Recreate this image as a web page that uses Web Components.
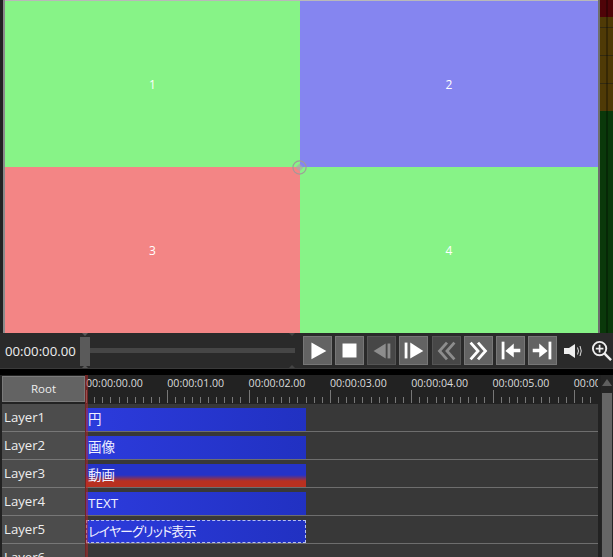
<!DOCTYPE html>
<html><head><meta charset="utf-8">
<style>
html,body{margin:0;background:#000;height:100%;overflow:hidden}
body{width:613px;height:557px;font-family:"Open Sans","Noto Sans CJK JP",sans-serif;color:#e8e8e8}
app-shell{display:block}
</style></head><body>
<app-shell>
  <preview-pane>
    <preview-tile color="#87f387">1</preview-tile>
    <preview-tile color="#8585f0">2</preview-tile>
    <preview-tile color="#f38585">3</preview-tile>
    <preview-tile color="#87f387">4</preview-tile>
  </preview-pane>
  <transport-bar></transport-bar>
  <time-line>
    <layer-row name="Layer1"><time-clip>円</time-clip></layer-row>
    <layer-row name="Layer2"><time-clip>画像</time-clip></layer-row>
    <layer-row name="Layer3"><time-clip kind="red">動画</time-clip></layer-row>
    <layer-row name="Layer4"><time-clip>TEXT</time-clip></layer-row>
    <layer-row name="Layer5"><time-clip kind="selected">レイヤーグリッド表示</time-clip></layer-row>
    <layer-row name="Layer6"></layer-row>
  </time-line>
</app-shell>
<script>
function def(name, html, proto){
  const t=document.createElement('template');t.innerHTML=html;
  customElements.define(name,class extends HTMLElement{
    constructor(){super();this.attachShadow({mode:'open'}).appendChild(t.content.cloneNode(true));}
    connectedCallback(){proto&&proto.call(this);}
  });
}
def('app-shell',`<style>:host{display:flex;flex-direction:column;width:613px;height:557px;overflow:hidden;background:#000}</style><slot></slot>`);

def('preview-tile',`<style>:host{display:flex;align-items:center;justify-content:center;font-size:12px;color:#fff}</style><slot></slot>`,
function(){this.style.background=this.getAttribute('color');});

def('preview-pane',`<style>
:host{display:flex;height:333px;background:#2b2b2b;flex:none;box-sizing:border-box}
.edge{width:3px;background:#222}.edge2{width:2px;background:#8a8a8a}
.main{width:593px;position:relative;display:flex;flex-direction:column}
.top{height:1px;background:#b9b9b9;flex:none}
.grid{flex:1;display:grid;grid-template-columns:295px 298px;grid-template-rows:166px 166px}
.sep{width:2px;background:#6e6e6e}
.meter{width:13px;display:flex;flex-direction:column;position:relative}
.meter .r{height:17px;background:#4f0408}
.meter .y{height:94px;background:#4f3a06;background-image:repeating-linear-gradient(to bottom,transparent 0 10px,#332a10 10px 11px,transparent 11px 28px)}
.meter .g{flex:1;background:#0a380a}
.meter i{position:absolute;left:6px;top:0;bottom:0;width:2px;background:rgba(0,0,0,.3)}
.pivot{position:absolute;left:287px;top:160px;width:15px;height:15px}
</style>
<div class="edge"></div><div class="edge2"></div>
<div class="main"><div class="top"></div><div class="grid"><slot></slot></div>
<svg class="pivot" viewBox="0 0 15 15"><circle cx="7.5" cy="7.5" r="6.6" fill="none" stroke="#a09a9a" stroke-width="1.2"/><path d="M7.5 3.5 11.5 7.5 7.5 11.5 3.5 7.5Z" fill="#a8a8a8" opacity=".7"/></svg>
</div>
<div class="sep"></div>
<div class="meter"><div class="r"></div><div class="y"></div><div class="g"></div><i></i></div>`);

const ic={
 play:'<path d="M8 6 24 15 8 24Z" fill="#fff"/>',
 stop:'<rect x="7" y="7" width="15" height="15" fill="#fff"/>',
 prev:'<path d="M19 7 6 15 19 23Z" fill="#8d8d8d"/><rect x="21" y="7" width="3" height="16" fill="#8d8d8d"/>',
 next:'<rect x="5" y="6" width="3" height="17" fill="#fff"/><path d="M11 6 25 15 11 23Z" fill="#fff"/>',
 rew:'<path d="M15 6 7 15 15 24M23 6 15 15 23 24" fill="none" stroke="#8d8d8d" stroke-width="3"/>',
 ff:'<path d="M6 6 14 15 6 24M14 6 22 15 14 24" fill="none" stroke="#fff" stroke-width="3"/>',
 first:'<rect x="5" y="5" width="3" height="19" fill="#fff"/><path d="M9 15 18 7V12.5H25V16.5H18V22Z" fill="#fff"/>',
 last:'<rect x="21" y="5" width="3" height="19" fill="#fff"/><path d="M20 15 11 7V12.5H4V16.5H11V22Z" fill="#fff"/>'
};
def('tool-btn',`<style>
:host{display:block;width:29px;height:29px;box-sizing:border-box;background:#636363;border:1px solid #777;flex:none}
:host([off]){background:#474747;border-color:#555}
svg{display:block;width:27px;height:27px}
</style><svg viewBox="0 0 29 29"></svg>`,function(){this.shadowRoot.querySelector('svg').innerHTML=ic[this.getAttribute('icon')];});

def('transport-bar',`<style>
:host{display:flex;align-items:center;height:35px;flex:none;background:#2a2a2a;border-bottom:1px solid #3a3a3a;box-sizing:content-box}
.time{width:75px;padding-left:5px;font-size:13.2px;color:#eee;flex:none;line-height:35px;margin-top:1px}
.slider{width:215px;height:35px;position:relative;flex:none;display:flex;align-items:center}
.thumb{width:10px;height:29px;background:#5a5a5a;flex:none;margin-top:1px}
.track{width:205px;height:5px;background:#464646;margin-top:-1px}
.tick{position:absolute;width:0;height:0;left:2px;border:3px solid transparent}
.t1{top:0;border-top-color:#5a5a5a}.t2{bottom:0;border-bottom-color:#5a5a5a}
.t3{top:0;left:209px;border-top-color:#444}.t4{bottom:0;left:209px;border-bottom-color:#444}
.btns{display:flex;gap:3.140px;margin-left:8px;margin-top:-1px}
.ext{display:flex;align-items:center;margin-left:6px;gap:8px}
</style>
<div class="time">00:00:00.00</div>
<div class="slider"><div class="thumb"></div><div class="track"></div><i class="tick t1"></i><i class="tick t2"></i><i class="tick t3"></i><i class="tick t4"></i></div>
<div class="btns">
<tool-btn icon="play"></tool-btn><tool-btn icon="stop"></tool-btn><tool-btn icon="prev" off></tool-btn><tool-btn icon="next"></tool-btn><tool-btn icon="rew" off></tool-btn><tool-btn icon="ff"></tool-btn><tool-btn icon="first"></tool-btn><tool-btn icon="last"></tool-btn>
</div>
<div class="ext">
<svg width="20" height="20" viewBox="0 0 20 20"><path d="M1 7H6L12 3V17L6 13H1Z" fill="#eee"/><path d="M14.5 6.5Q16.5 10 14.5 13.5M17 5Q19.500 10 17 15" fill="none" stroke="#ddd" stroke-width="1"/></svg>
<svg width="21" height="21" viewBox="0 0 22 22"><circle cx="9" cy="9" r="7" fill="none" stroke="#eee" stroke-width="2"/><path d="M14 14 21 21" stroke="#eee" stroke-width="2.600"/><path d="M5 9H13M9 5V13" stroke="#eee" stroke-width="1.800"/></svg>
</div>`);

def('time-ruler',`<style>
:host{display:block;position:relative;height:29px;width:512px;overflow:hidden;font-size:10.6px;color:#ddd}
span{position:absolute;top:1px;line-height:15px;white-space:nowrap}
svg{position:absolute;left:0;top:0}
</style><svg width="512" height="29"></svg>`,function(){
  const r=this.shadowRoot,p=81.3;let d='';
  for(let i=0;i<=63;i++){const x=Math.round(i*p/10)+.5;d+=`M${x} ${i%10==0?15:22}V28`;}
  r.querySelector('svg').innerHTML=`<path d="${d}" stroke="#777" stroke-width="1" fill="none"/>`;
  for(let i=0;i<7;i++){const s=document.createElement('span');s.style.left=(i*p)+'px';s.textContent=`00:00:0${i}.00`;r.appendChild(s);}
});

def('time-clip',`<style>
:host{display:block;width:220px;height:23px;box-sizing:border-box;background:linear-gradient(90deg,#2c3bdc,#2131c2);color:#f0f0ff;font-size:13.500px;line-height:23px;padding-left:2px;white-space:nowrap;align-self:flex-end;position:relative;margin-bottom:0}
:host([kind=red]){background:linear-gradient(180deg,#2433c8 0,#2433c8 11px,#b83020 17px,#b83020 100%)}
:host([kind=selected]){outline:1px dashed #b8c0f0;outline-offset:-1px;font-feature-settings:"palt";font-size:13px;letter-spacing:-.9px}
</style><slot></slot>`);

def('layer-row',`<style>
:host{display:flex;height:28px;flex:none;box-sizing:border-box}
.name{width:83px;margin-left:2px;box-sizing:border-box;background:#4c4c4c;border-bottom:1px solid #777;font-size:13.200px;line-height:27px;padding-left:2px;color:#eee;flex:none;white-space:nowrap;overflow:hidden}
.track{width:512px;margin-left:1px;background:#383838;border-bottom:1px solid #6e6e6e;display:flex;box-sizing:border-box}
</style><div class="name"></div><div class="track"><slot></slot></div>`,function(){this.shadowRoot.querySelector('.name').textContent=this.getAttribute('name');});

def('time-line',`<style>
:host{display:flex;flex-direction:column;flex:1;margin-top:6px;background:#222;position:relative;overflow:hidden}
.head{display:flex;height:29px;flex:none}
.root{width:83px;height:26px;margin:1px 0 2px 2px;box-sizing:border-box;background:#636363;border:1px solid #7a7a7a;font-size:11.500px;color:#eee;text-align:center;line-height:24px;flex:none}
time-ruler{margin-left:1px}
.body{display:flex;flex-direction:column}
.play{position:absolute;left:85px;top:0;bottom:0;width:3px;background:rgba(190,40,40,.5)}
.sb{position:absolute;left:601px;top:0;bottom:0;width:12px;background:#252525}
.arrow{position:absolute;left:1px;top:4px;width:0;height:0;border:5px solid transparent;border-bottom:7px solid #5f5f5f;border-top:0}
.thumb{position:absolute;left:1px;top:18px;bottom:0;width:10px;background:#666}
</style>
<div class="head"><div class="root">Root</div><time-ruler></time-ruler></div>
<div class="body"><slot></slot></div>
<div class="play"></div>
<div class="sb"><div class="arrow"></div><div class="thumb"></div></div>`);
</script>
</body></html>
